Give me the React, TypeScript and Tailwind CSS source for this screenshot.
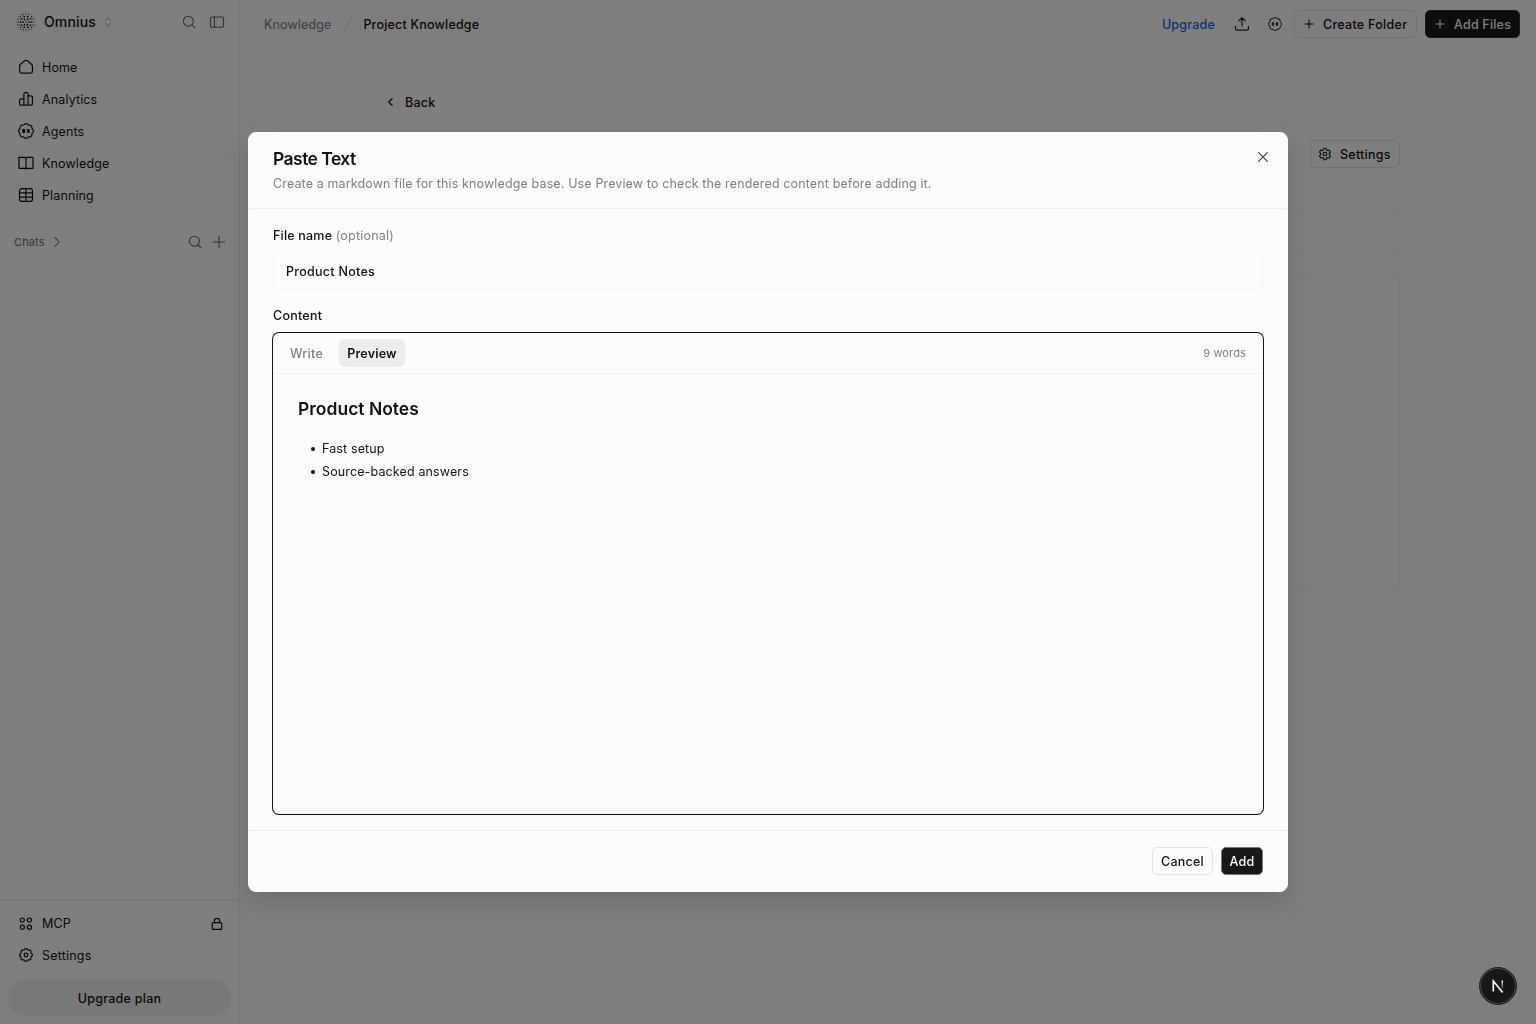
import type { ReactNode } from "react";

type IconProps = { size?: number; className?: string; width?: number; children?: ReactNode };

const Svg = ({ size = 16, className = "", width = 1.2, children }: IconProps) => (
  <svg width={size} height={size} viewBox="0 0 16 16" fill="none" stroke="currentColor" strokeWidth={width} strokeLinecap="round" strokeLinejoin="round" className={`shrink-0 ${className}`}>
    {children}
  </svg>
);

// wavy outline shared by the agent and settings icons
const scallop = (lobes: number, radius: number, depth: number) => {
  const points: string[] = [];
  for (let i = 0; i <= 120; i++) {
    const a = (i / 120) * Math.PI * 2;
    const r = radius + depth * Math.cos(a * lobes);
    points.push(`${(8 + r * Math.sin(a)).toFixed(2)} ${(8 - r * Math.cos(a)).toFixed(2)}`);
  }
  return `M${points.join("L")}Z`;
};

const HomeIcon = () => (
  <Svg><path d="M1.6 7.1c0-.8.3-1.4.9-1.9l4.2-3.4c.8-.6 1.8-.6 2.6 0l4.2 3.4c.6.5.9 1.1.9 1.9v5c0 1.2-.9 2.1-2.1 2.1H3.7c-1.2 0-2.1-.9-2.1-2.1z" /></Svg>
);
const AnalyticsIcon = () => (
  <Svg><path d="M5.9 14.2H3a1.4 1.4 0 0 1-1.4-1.4V9.3c0-.8.6-1.4 1.4-1.4h2.9M5.9 14.2V3c0-.8.6-1.4 1.4-1.4h1.3c.8 0 1.4.6 1.4 1.4v11.2zM10 4.9h3c.8 0 1.4.6 1.4 1.4v6.5c0 .8-.6 1.4-1.4 1.4h-3" /></Svg>
);
const AgentIcon = ({ size = 16, className = "" }: IconProps) => (
  <Svg size={size} className={className}>
    <path d={scallop(8, 7, 0.4)} />
    <rect x="4.3" y="6" width="2.8" height="4" rx="0.8" fill="currentColor" stroke="none" />
    <rect x="8.9" y="6" width="2.8" height="4" rx="0.8" fill="currentColor" stroke="none" />
  </Svg>
);
const BookIcon = () => (
  <Svg><path d="M8 3.8c0-.8-.6-1.4-1.4-1.4H1v10.9h5.4c.9 0 1.6.3 1.6.8 0-.5.7-.8 1.6-.8H15V2.4H9.4c-.8 0-1.4.6-1.4 1.4zM8 3.8v10" /></Svg>
);
const GridIcon = () => (
  <Svg><rect x="1.5" y="1.6" width="13" height="12.8" rx="2.4" /><path d="M1.5 5.9h13M1.5 10.1h13M8 1.6v12.8" /></Svg>
);
const SearchIcon = ({ className = "" }: IconProps) => (
  <Svg className={className} width={1.1}><circle cx="7.4" cy="7.2" r="5" /><path d="M11 10.9l2.7 2.8" /></Svg>
);
const PanelIcon = () => (
  <Svg width={1.1}><rect x="1.6" y="3" width="12.9" height="10.2" rx="1.2" /><path d="M5.5 3v10.2" /></Svg>
);
const PlusIcon = () => (
  <Svg width={1.2}><path d="M8 2.4v11.2M2.4 8h11.2" /></Svg>
);
const SmallPlusIcon = () => (
  <Svg size={12} width={1.4}><path d="M8 2.8v10.4M2.8 8h10.4" /></Svg>
);
const McpIcon = () => (
  <Svg><circle cx="4.3" cy="4.1" r="2.1" /><circle cx="11.4" cy="4.1" r="2.1" /><circle cx="4.3" cy="11.2" r="2.1" /><circle cx="11.4" cy="11.2" r="2.1" /></Svg>
);
const LockIcon = () => (
  <Svg><rect x="3.3" y="6.7" width="9.4" height="6.7" rx="1" /><path d="M5.3 6.7V5a2.7 2.7 0 0 1 5.4 0v1.7" /></Svg>
);
const CogIcon = () => (
  <Svg className="-mt-0.5"><path d={scallop(8, 5.9, 0.5)} /><circle cx="8" cy="8" r="1.8" /></Svg>
);
const GearIcon = () => (
  <Svg size={14}>
    <path d="M6.7 1.5h2.6l.5 1.9 1.2.7 1.9-.6 1.3 2.3L12.9 7.3v1.4l1.3 1.5-1.3 2.3-1.9-.6-1.2.7-.5 1.9H6.7l-.5-1.9-1.2-.7-1.9.6-1.3-2.3 1.3-1.5V7.3L1.8 5.8l1.3-2.3 1.9.6 1.2-.7z" />
    <circle cx="8" cy="8" r="2.1" />
  </Svg>
);
const UploadIcon = () => (
  <Svg width={1.2} className="text-[#222]"><path d="M8 10V1.8M4.8 4.8L8 1.6l3.2 3.2M1.5 10.3v2.2c0 1 .7 1.7 1.7 1.7h9.6c1 0 1.7-.7 1.7-1.7v-2.2" /></Svg>
);

const rings = [
  { count: 6, r: 3, size: 1.6 },
  { count: 10, r: 5.5, size: 1.7 },
  { count: 16, r: 7.8, size: 1.1 },
  { count: 20, r: 9.4, size: 0.7 },
];

const Logo = () => (
  <svg width="20" height="20" viewBox="0 0 20 20" fill="currentColor" className="shrink-0">
    <rect x="9.4" y="9.4" width="1.2" height="1.2" />
    {rings.map(({ count, r, size }) =>
      Array.from({ length: count }, (_, i) => {
        const a = (i / count) * Math.PI * 2;
        return <rect key={`${r}-${i}`} x={10 + r * Math.cos(a) - size / 2} y={10 + r * Math.sin(a) - size / 2} width={size} height={size} rx={0.3} />;
      })
    )}
  </svg>
);

const navItems = [
  { label: "Home", icon: <HomeIcon /> },
  { label: "Analytics", icon: <AnalyticsIcon /> },
  { label: "Agents", icon: <AgentIcon /> },
  { label: "Knowledge", icon: <BookIcon /> },
  { label: "Planning", icon: <GridIcon /> },
];

const Sidebar = () => (
  <aside className="flex w-60 shrink-0 flex-col border-r border-[#ececec]">
    <div className="flex h-11 items-center pl-4 pr-[14px]">
      <Logo />
      <span className="ml-2 text-[14px] font-medium leading-5">Omnius</span>
      <svg width="8" height="10" viewBox="0 0 8 10" fill="none" stroke="currentColor" strokeLinecap="round" strokeLinejoin="round" className="ml-2 text-[#a0a0a0]">
        <path d="M1.3 3.4L4 .8l2.7 2.6M1.3 6.6L4 9.2l2.7-2.6" />
      </svg>
      <div className="ml-auto flex gap-3 text-[#666]">
        <SearchIcon />
        <PanelIcon />
      </div>
    </div>
    <nav className="mt-[7px] flex flex-col px-2">
      {navItems.map((item) => (
        <a key={item.label} className="flex h-8 items-center gap-2 px-[10px]">
          {item.icon}
          <span className="pt-0.5">{item.label}</span>
        </a>
      ))}
    </nav>
    <div className="mt-[15px] flex h-8 items-center pl-[14px] pr-3 text-[#707070]">
      <span className="text-[11px]">Chats</span>
      <Svg size={12} className="ml-[6px]" width={1.4}><path d="M5.5 2.5L11 8l-5.5 5.5" /></Svg>
      <div className="ml-auto flex gap-2 text-[#666]">
        <SearchIcon />
        <PlusIcon />
      </div>
    </div>
    <div className="mt-auto border-t border-[#ececec] px-2 pb-2 pt-2">
      <a className="flex h-8 items-center gap-2 pl-[10px] pr-[6px]">
        <McpIcon />
        MCP
        <span className="ml-auto"><LockIcon /></span>
      </a>
      <a className="flex h-8 items-center gap-2 px-[10px] tracking-[0.2px]">
        <CogIcon />
        Settings
      </a>
      <button className="mt-2 h-9 w-full rounded-full bg-[#f0f0f0] pt-0.5 font-medium tracking-[0.25px]">Upgrade plan</button>
    </div>
  </aside>
);

const TopBar = () => (
  <header className="flex h-12 shrink-0 items-center pl-6 pr-4 font-medium tracking-[0.2px]">
    <span className="pt-0.5 font-normal tracking-[0.13px] text-[#808080]">Knowledge</span>
    <svg width="8" height="16" viewBox="0 0 8 16" stroke="#dcdcdc" className="ml-[13px] mr-[11px]"><path d="M7 1L1 15" /></svg>
    <span className="pt-0.5">Project Knowledge</span>
    <div className="ml-auto flex items-center">
      <a className="pt-0.5 text-[#2563eb]">Upgrade</a>
      <span className="ml-[19px]"><UploadIcon /></span>
      <AgentIcon size={14} className="ml-[18px] text-[#333]" />
      <button className="ml-3 flex h-[28px] w-[123px] items-center gap-2 rounded-[5px] border border-[#e5e5e5] pl-2 tracking-[0.28px]">
        <SmallPlusIcon />
        <span className="pt-0.5">Create Folder</span>
      </button>
      <button className="ml-2 flex h-[28px] w-[95px] items-center gap-2 rounded-[5px] border border-[#3a3a3a] bg-[#18181b] pl-2 text-[#fcfcfc]">
        <SmallPlusIcon />
        <span className="pt-0.5">Add Files</span>
      </button>
    </div>
  </header>
);

const KnowledgePage = () => (
  <main className="flex min-w-0 flex-1 flex-col">
    <TopBar />
    <div className="mx-auto w-full max-w-[1024px] pt-10 font-medium tracking-[0.25px]">
      <button className="flex h-7 items-center gap-2 pl-[9px]">
        <Svg size={12} width={1.8}><path d="M9.5 3.5L5 8l4.5 4.5" /></Svg>
        <span className="pt-0.5">Back</span>
      </button>
      <div className="mt-6 flex justify-end">
        <button className="flex h-[28px] w-[90px] items-center gap-2 rounded-[5px] border border-[#e5e5e5] pl-[7px]">
          <GearIcon />
          <span className="pt-0.5">Settings</span>
        </button>
      </div>
      <div className="mt-[46px] h-10 rounded-md border-y border-[#f5f5f5]" />
      <div className="mt-[18px] h-80 rounded-md border border-[#f0f0f0]" />
    </div>
  </main>
);

const Preview = () => (
  <div className="px-[25px] pt-[22px]">
    <h1 className="text-[17.5px] font-semibold leading-[26px] tracking-normal">Product Notes</h1>
    <ul className="mt-[15px] list-none leading-[23px]">
      {["Fast setup", "Source-backed answers"].map((line) => (
        <li key={line} className="flex items-center pl-3">
          <span className="mr-[7.5px] ml-[0.5px] size-1 rounded-full bg-[#111]" />
          {line}
        </li>
      ))}
    </ul>
  </div>
);

const PasteTextDialog = () => (
  <div role="dialog" className="flex h-[760px] w-[1040px] flex-col overflow-hidden rounded-lg border border-[#fcfcfc] bg-[#fcfcfc] shadow-[0_10px_24px_rgba(0,0,0,0.14)]">
    <div className="flex h-[76px] shrink-0 justify-between border-b border-[#efefef] pl-6 pr-[18px]">
      <div>
        <h2 className="mt-[14px] text-[17.5px] font-semibold leading-6 tracking-[-0.55px]">Paste Text</h2>
        <p className="mt-[3px] leading-5 text-[#808080]">
          Create a markdown file for this knowledge base. Use Preview to check the rendered content before adding it.
        </p>
      </div>
      <Svg size={12} className="mt-[18px] text-[#444]" width={1.7}><path d="M2.2 2.2l11.6 11.6M13.8 2.2L2.2 13.8" /></Svg>
    </div>
    <div className="flex min-h-0 flex-1 flex-col px-6 pb-4 pt-[17px]">
      <label className="font-medium leading-5 tracking-[0.2px]">
        File name <span className="font-normal text-[#808080]">(optional)</span>
      </label>
      <div className="mt-[7px] flex h-[37px] items-center rounded-md border border-[#f4f4f4] border-t-transparent px-3 pt-0.5 font-medium tracking-[0.28px]">Product Notes</div>
      <label className="mt-4 font-medium leading-5 tracking-[0.25px]">Content</label>
      <div className="mt-[7px] flex-1 rounded-md ring-1 ring-[#111]">
        <div className="flex h-[41px] items-center border-b border-[#f2f2f2] pl-[9px] pr-[17px]">
          <button className="h-7 px-2 pt-0.5 font-medium tracking-[0.25px] text-[#808080]">Write</button>
          <button className="ml-2 h-7 w-[66px] rounded-md bg-[#ececec] pt-0.5 font-semibold tracking-[0.2px]">Preview</button>
          <span className="ml-auto text-[11px] text-[#808080]">9 words</span>
        </div>
        <Preview />
      </div>
    </div>
    <div className="flex h-[61px] shrink-0 items-center justify-end gap-2 border-t border-[#ececec] px-6 font-medium tracking-[0.25px]">
      <button className="h-[28px] w-[61px] rounded-[5px] border border-[#e4e4e4] pt-0.5">Cancel</button>
      <button className="h-[28px] w-[42px] rounded-[5px] border border-[#77777a] bg-[#18181b] pt-0.5 text-white">Add</button>
    </div>
  </div>
);

const App = () => (
  <div className="flex h-screen overflow-hidden bg-[#fdfdfd] font-['Inter',sans-serif] text-[12.5px] tracking-[0.13px] text-[#111]">
    <Sidebar />
    <KnowledgePage />
    <div className="fixed inset-0 flex items-center justify-center bg-black/50">
      <PasteTextDialog />
    </div>
    <div className="fixed bottom-[19px] right-[19px] flex size-[38px] items-center justify-center rounded-full border border-[#222] bg-[#171717] ring-1 ring-inset ring-[#4a4a4a]">
      <svg width="14" height="14" viewBox="0 0 14 14" fill="none" strokeWidth="1.6">
        <defs>
          <linearGradient id="stem" x1="0" y1="0" x2="0" y2="1">
            <stop offset="0" stopColor="#fff" />
            <stop offset="1" stopColor="#fff" stopOpacity="0.1" />
          </linearGradient>
        </defs>
        <path d="M2.3 12.500V2l9.300 11.500" stroke="#fff" />
        <rect x="10.500" y="1.500" width="1.500" height="8.500" fill="url(#stem)" />
      </svg>
    </div>
  </div>
);

export default App;
